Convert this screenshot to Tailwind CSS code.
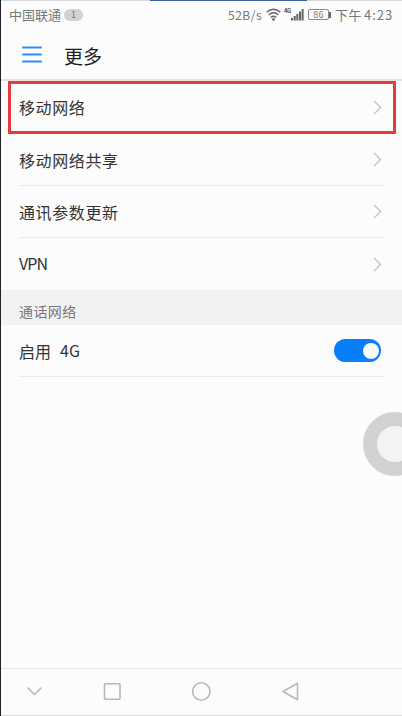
<!DOCTYPE html>
<html lang="zh-CN">
<head>
<meta charset="UTF-8">
<meta name="viewport" content="width=device-width, initial-scale=1">
<title>更多</title>
<script src="https://cdn.jsdelivr.net/npm/@tailwindcss/browser@4"></script>
</head>
<body class="w-[402px] h-[716px] overflow-hidden bg-[#fcfcfc]">
<div class="relative flex flex-col w-[402px] h-[716px] overflow-hidden border-l border-[#222226] bg-[#fcfcfc] font-['Noto_Sans_CJK_SC',sans-serif] text-[#333333]">
  <div class="flex h-px shrink-0 bg-[#d9d9dc]"><div class="ml-[149px] w-[157px] bg-[#3c5fa5]"></div></div>

  <!-- Status bar -->
  <div class="flex items-center h-[29px] shrink-0 pl-[8px] pr-[8px] text-[#777777] whitespace-nowrap">
    <span class="text-[13px] leading-[20px] w-[53px] mt-[-1px]">中国联通</span>
    <span class="ml-[2px] mt-[-2px] flex items-center justify-center w-[19px] h-[12px] rounded-full bg-[#d2d2d2] text-[9px] leading-none">1</span>
    <span class="ml-auto mt-[-2px] text-[12px] leading-[20px] tracking-[0.5px] w-[37px]">52B/s</span>
    <svg class="ml-[1px] mt-[-2px] w-[15px] h-[13px]" viewBox="0 0 15 13" fill="none" stroke="#636363" stroke-width="1.4"><path d="M.7 4.2Q7.5-1.7 14.3 4.2M2.8 6.9Q7.5 2.8 12.2 6.9M4.8 9.4Q7.5 7 10.2 9.4"/><circle cx="7.5" cy="11.4" r="1.300" fill="#636363" stroke="none"/></svg>
    <span class="ml-[3px] mt-[-10px] w-[7px] text-[6px] leading-[7px] font-bold tracking-[-0.5px] text-[#555]">4G</span>
    <svg class="-ml-px mt-[-2px] w-[14px] h-[13px]" viewBox="0 0 14 13" fill="#636363"><path d="M1 10h2v2.500H1zM3.700 8h2v4.500h-2zM6.300 6h2v6.500h-2zM9 3.500h2v9H9zM11.600 1h2v11.500h-2z"/></svg>
    <span class="ml-[4px] mt-[-2px] flex items-center justify-center w-[21px] h-[11px] rounded-[2px] border border-[#8a8a8a] text-[9px] leading-none tracking-[0.3px]">86</span>
    <span class="mt-[-2px] w-[2px] h-[6px] bg-[#666]"></span>
    <span class="ml-[4px] mt-[-2px] flex w-[59px] text-[13px] leading-[20px]"><span class="w-[29px] tracking-[0.6px]">下午</span><span class="tracking-[1px]">4:23</span></span>
  </div>

  <!-- Title bar -->
  <div class="flex items-center h-[49px] shrink-0 pl-[21px]">
    <svg class="w-[20px] h-[17px]" viewBox="0 0 20 17" stroke="#2b8fee" stroke-width="2" stroke-linecap="round"><path d="M1 1.500h18M1 8.500h18M1 15.500h18"/></svg>
    <h1 class="ml-[22px] mt-[2px] text-[19px] leading-[28px] font-normal text-[#1d1d1d]">更多</h1>
  </div>
  <div class="h-[2px] shrink-0 bg-[#e8e0e3]"></div>

  <div class="relative flex flex-col">
    <div class="flex items-center justify-between h-[52px] pl-[18px] pr-[20px] text-[16px] leading-[24px] tracking-[0.6px]"><span>移动网络</span><svg class="w-[9px] h-[15px]" viewBox="0 0 9 15" fill="none" stroke="#c8c8c8" stroke-width="1.500"><path d="M1 1l6.500 6.500L1 14"/></svg></div>
    <div class="flex items-center justify-between h-[53px] ml-[18px] mr-[18px] pr-[2px] border-b border-[#ebebeb] text-[16px] leading-[24px] tracking-[0.6px]"><span class="mt-px">移动网络共享</span><svg class="w-[9px] h-[15px]" viewBox="0 0 9 15" fill="none" stroke="#c8c8c8" stroke-width="1.500"><path d="M1 1l6.500 6.500L1 14"/></svg></div>
    <div class="flex items-center justify-between h-[52px] ml-[18px] mr-[18px] pr-[2px] border-b border-[#ebebeb] text-[16px] leading-[24px] tracking-[0.6px]"><span>通讯参数更新</span><svg class="w-[9px] h-[15px]" viewBox="0 0 9 15" fill="none" stroke="#c8c8c8" stroke-width="1.500"><path d="M1 1l6.500 6.500L1 14"/></svg></div>
    <div class="flex items-center justify-between h-[52px] ml-[18px] mr-[18px] pr-[2px] text-[16px] leading-[24px] tracking-[-0.9px]"><span class="mt-[-3px]">VPN</span><svg class="w-[9px] h-[15px]" viewBox="0 0 9 15" fill="none" stroke="#c8c8c8" stroke-width="1.500"><path d="M1 1l6.500 6.500L1 14"/></svg></div>
    <div class="absolute left-[7px] top-0 w-[388px] h-[53px] border-[3px] border-[#e53c3a]"></div>
  </div>

  <div class="flex items-center h-[35px] shrink-0 pl-[18px] pt-[7px] bg-[#f2f2f2] text-[14px] leading-[20px] tracking-[0.4px] text-[#777777]">通话网络</div>

  <div class="flex items-center justify-between h-[52px] shrink-0 ml-[18px] mr-[18px] pr-[3px] border-b border-[#ebebeb] text-[16px] leading-[24px]">
    <span class="flex"><span class="w-[41px]">启用</span><span class="-mt-px">4G</span></span>
    <span class="flex items-center justify-end w-[47px] h-[23px] pr-[2px] rounded-full bg-[#087ff8]"><span class="size-[16px] rounded-full bg-[#fdfdfd]"></span></span>
  </div>

  <!-- Floating assistive button -->
  <div class="absolute left-[362px] top-[412px] size-[64px] rounded-full border-[14px] border-[#d2d2d2] bg-[#f4f4f4]"></div>

  <!-- Navigation bar -->
  <div class="relative mt-auto h-[48px] shrink-0 border-t border-b border-t-[#e6e6e6] border-b-[#dadada]">
    <svg class="w-[401px] h-[46px]" viewBox="1 669 401 46" fill="none" stroke="#b8b8b8" stroke-width="1.600" stroke-linecap="round" stroke-linejoin="round"><path d="M28 688l6.500 6.500L41 688M297.500 683.300v16.500L283 691.500z"/><rect x="104.500" y="683.700" width="15.500" height="15.500" rx="1"/><circle cx="201.300" cy="691.500" r="8.700"/></svg>
  </div>
</div>
</body>
</html>
